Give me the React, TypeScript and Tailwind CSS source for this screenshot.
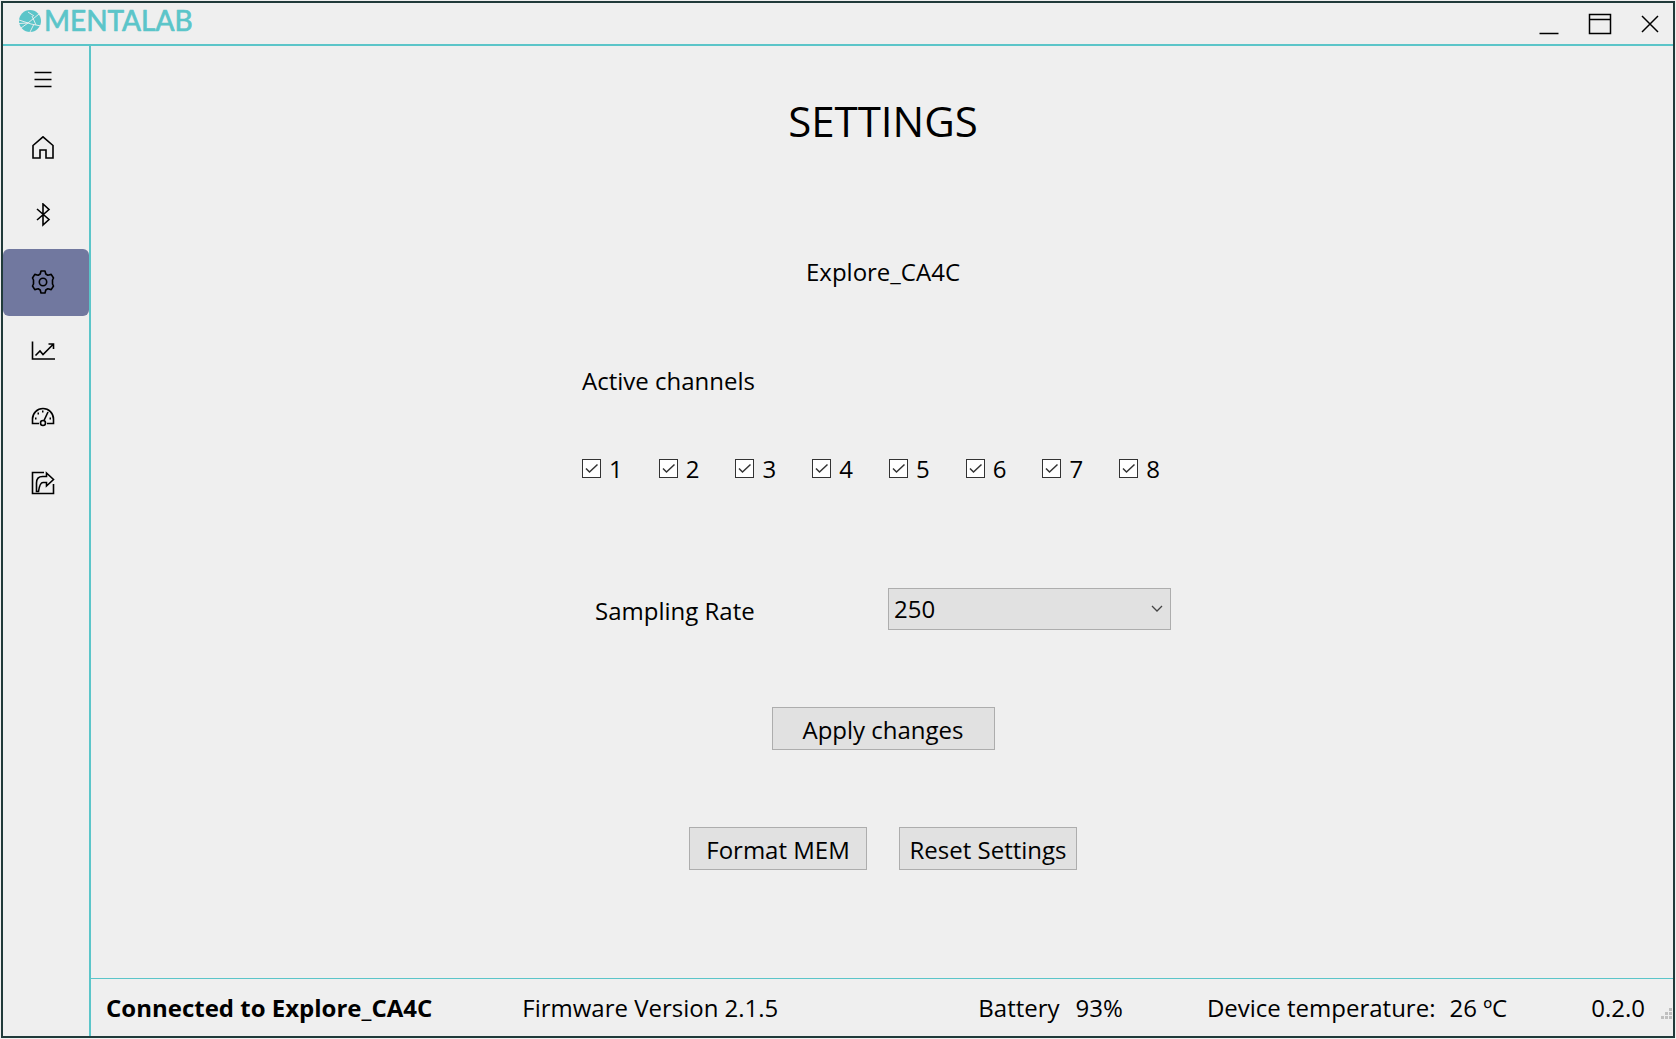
import React from "react";

type IconProps = { children: React.ReactNode };

function NavIcon({ children }: IconProps) {
  return (
    <svg width="24" height="24" viewBox="0 0 24 24" fill="none" stroke="#000" strokeWidth="1.6" aria-hidden="true">
      {children}
    </svg>
  );
}

const navItems = [
  {
    label: "Menu",
    active: false,
    icon: <path d="M3.500 3.500h17M3.500 10.500h17M3.500 17.500h17" />,
  },
  {
    label: "Home",
    active: false,
    icon: <path d="M2 9.500 12 .8l10 8.700V22h-7v-8H9v8H2z" />,
  },
  {
    label: "Bluetooth",
    active: false,
    icon: <path d="M6 6 18 16.500l-6 5.500V1l6 5.500L6 17" />,
  },
  {
    label: "Settings",
    active: true,
    icon: (
      <>
        <path
          strokeLinejoin="round"
          d="M10 1h4l.8 3 2 1.200 3.400-.8 2.300 3.600-1 2v4l1 2-2.300 3.600-3.400-.8-2 1.200-.8 3h-4l-.8-3-2-1.200-3.400.8L1.500 16l1-2v-4l-1-2 2.300-3.600 3.400.8 2-1.200z"
        />
        <circle cx="12" cy="12" r="3.700" />
      </>
    ),
  },
  {
    label: "Visualization",
    active: false,
    icon: <path d="M1.500 4.500V22H24M4.500 18.500 9 14l3 3.500L22.500 7M17.500 7h5v5" />,
  },
  {
    label: "Impedance",
    active: false,
    icon: (
      <>
        <path d="M8 19.500H1.500V15a10.500 10.500 0 0 1 21 0v4.500H16" />
        <circle cx="12" cy="19" r="2.500" />
        <path d="m13 16.500 4-8.500" />
        <path strokeWidth="2" d="M4 14.500h1.500M6.500 9.500H8M11 7.500h1.500M18.500 14.500H20" />
      </>
    ),
  },
  {
    label: "Export",
    active: false,
    icon: (
      <>
        <path d="M13 1.500H1.500v21h21V13" />
        <path d="M15.500 2 22.500 8.500l-7 6.500V11.500H12c-2 0-3.500 2-4.500 9H5.500V12c0-4 2-6.500 6-6.500h4z" />
      </>
    ),
  },
];

function Logo() {
  return (
    <svg width="190" height="38" viewBox="0 -6 190 38" role="img" aria-label="Mentalab">
      <circle cx="11" cy="12" r="11" fill="#5bc5c9" />
      <path
        d="M0 14.500 9 14 20 5M0 11l12 4 10 2M13 7l4 9M9 3l6 4M15 15l-4 8M2 19l7-5"
        fill="none"
        stroke="#efefef"
        strokeWidth="0.9"
      />
      <text
        x="25"
        y="22"
        fill="#5bc5c9"
        stroke="#5bc5c9"
        strokeWidth="0.7"
        strokeLinejoin="round"
        fontFamily="Lato, sans-serif"
        fontSize="28"
      >
        MENTALAB
      </text>
    </svg>
  );
}

function PushButton({ children, width }: { children: React.ReactNode; width: string }) {
  return (
    <button type="button" className={`${width} h-[43px] border border-[#adadad] bg-[#e1e1e1] pt-0.5 text-center leading-9`}>
      {children}
    </button>
  );
}

function Channel({ n }: { n: number }) {
  return (
    <label className="flex items-center gap-2">
      <span className="grid size-[19px] place-items-center">
        <input
          type="checkbox"
          defaultChecked
          className="peer col-start-1 row-start-1 size-[19px] appearance-none border border-[#333] bg-white"
        />
        <svg
          className="pointer-events-none invisible col-start-1 row-start-1 peer-checked:visible"
          width="19"
          height="19"
          viewBox="0 0 19 19"
          fill="none"
          stroke="#333"
          strokeWidth="1.5"
          aria-hidden="true"
        >
          <path d="m4 9.500 3.500 3.500L15.500 5.500" />
        </svg>
      </span>
      <span className="pt-0.5">{n}</span>
    </label>
  );
}

export default function App() {
  return (
    <div className="h-screen bg-[#efefef] p-px font-['Open_Sans',sans-serif] text-2xl text-black">
      <div className="flex h-full flex-col border-2 border-[#203a3a]">
        <header className="flex h-[43px] shrink-0 items-start justify-between border-b-2 border-[#5bc5c9] pl-4">
          <Logo />
          <div className="flex h-full items-center gap-[26px] pt-px pr-[11px]">
            <button type="button" aria-label="Minimize">
              <svg width="24" height="24" viewBox="0 0 24 24" fill="none" stroke="#000" strokeWidth="1.500">
                <path d="M1.500 21.500h19" />
              </svg>
            </button>
            <button type="button" aria-label="Maximize">
              <svg width="24" height="24" viewBox="0 0 24 24" fill="none" stroke="#000" strokeWidth="1.500">
                <path d="M1.500 2.500h21v19h-21zM1.500 7.500h21" />
              </svg>
            </button>
            <button type="button" aria-label="Close">
              <svg width="24" height="24" viewBox="0 0 24 24" fill="none" stroke="#000" strokeWidth="1.500">
                <path d="m4 4 16 16M20 4 4 20" />
              </svg>
            </button>
          </div>
        </header>

        <div className="flex min-h-0 grow">
          <nav className="flex w-[88px] shrink-0 flex-col border-r-2 border-[#5bc5c9] pt-0.5">
            {navItems.map((item) => (
              <button
                key={item.label}
                type="button"
                aria-label={item.label}
                className={
                  item.active
                    ? "flex h-[67px] w-full items-center justify-center rounded-md bg-[#71789f] pr-1.5 pb-0.5"
                    : "flex h-[67px] w-full items-center justify-center pr-1.5 pb-0.5"
                }
              >
                <NavIcon>{item.icon}</NavIcon>
              </button>
            ))}
          </nav>

          <div className="flex min-w-0 grow flex-col">
            <main className="flex grow flex-col items-center pt-[47px] pl-0.5">
              <h1 className="text-[42px] leading-14">SETTINGS</h1>
              <p className="mt-[105px] leading-9">Explore_CA4C</p>

              <div className="mt-[73px] w-[602px]">
                <h2 className="leading-9">Active channels</h2>
                <div className="mt-[50px] flex gap-9 leading-9">
                  {[1, 2, 3, 4, 5, 6, 7, 8].map((n) => (
                    <Channel key={n} n={n} />
                  ))}
                </div>
                <div className="mt-[101px] flex items-center justify-between pr-[13px] pl-[13px]">
                  <label htmlFor="rate" className="pt-1 leading-9">
                    Sampling Rate
                  </label>
                  <div className="grid w-[283px] items-center">
                    <select
                      id="rate"
                      defaultValue="250"
                      className="col-start-1 row-start-1 h-[42px] w-full appearance-none border border-[#adadad] bg-[#e1e1e1] pl-[5px]"
                    >
                      <option>250</option>
                      <option>500</option>
                      <option>1000</option>
                    </select>
                    <svg
                      className="pointer-events-none col-start-1 row-start-1 mr-2 justify-self-end"
                      width="12"
                      height="8"
                      viewBox="0 0 12 8"
                      fill="none"
                      stroke="#444"
                      strokeWidth="1.300"
                      aria-hidden="true"
                    >
                      <path d="m1 1 5 5 5-5" />
                    </svg>
                  </div>
                </div>
              </div>

              <div className="mt-[77px] flex">
                <PushButton width="w-[223px]">Apply changes</PushButton>
              </div>
              <div className="mt-[77px] flex gap-8">
                <PushButton width="w-[178px]">Format MEM</PushButton>
                <PushButton width="w-[178px]">Reset Settings</PushButton>
              </div>
            </main>

            <footer className="flex h-[58px] shrink-0 items-center border-t border-[#5bc5c9] pl-[15px] leading-9">
              <strong>Connected to Explore_CA4C</strong>
              <div className="ml-[90px] flex gap-1.5">
                <span>Firmware Version</span>
                <span>2.1.5</span>
              </div>
              <div className="ml-auto flex gap-4">
                <span>Battery</span>
                <span>93%</span>
              </div>
              <div className="ml-[84px] flex gap-3.5">
                <span>Device temperature:</span>
                <span>26 ºC</span>
              </div>
              <span className="ml-[84px]">0.2.0</span>
              <svg className="mb-4 ml-4 self-end" width="12" height="12" viewBox="0 0 12 12" fill="#bfbfbf" aria-hidden="true">
                <path d="M8 0h3v3H8zM4 4h3v3H4zM8 4h3v3H8zM0 8h3v3H0zM4 8h3v3H4zM8 8h3v3H8z" />
              </svg>
            </footer>
          </div>
        </div>
      </div>
    </div>
  );
}
